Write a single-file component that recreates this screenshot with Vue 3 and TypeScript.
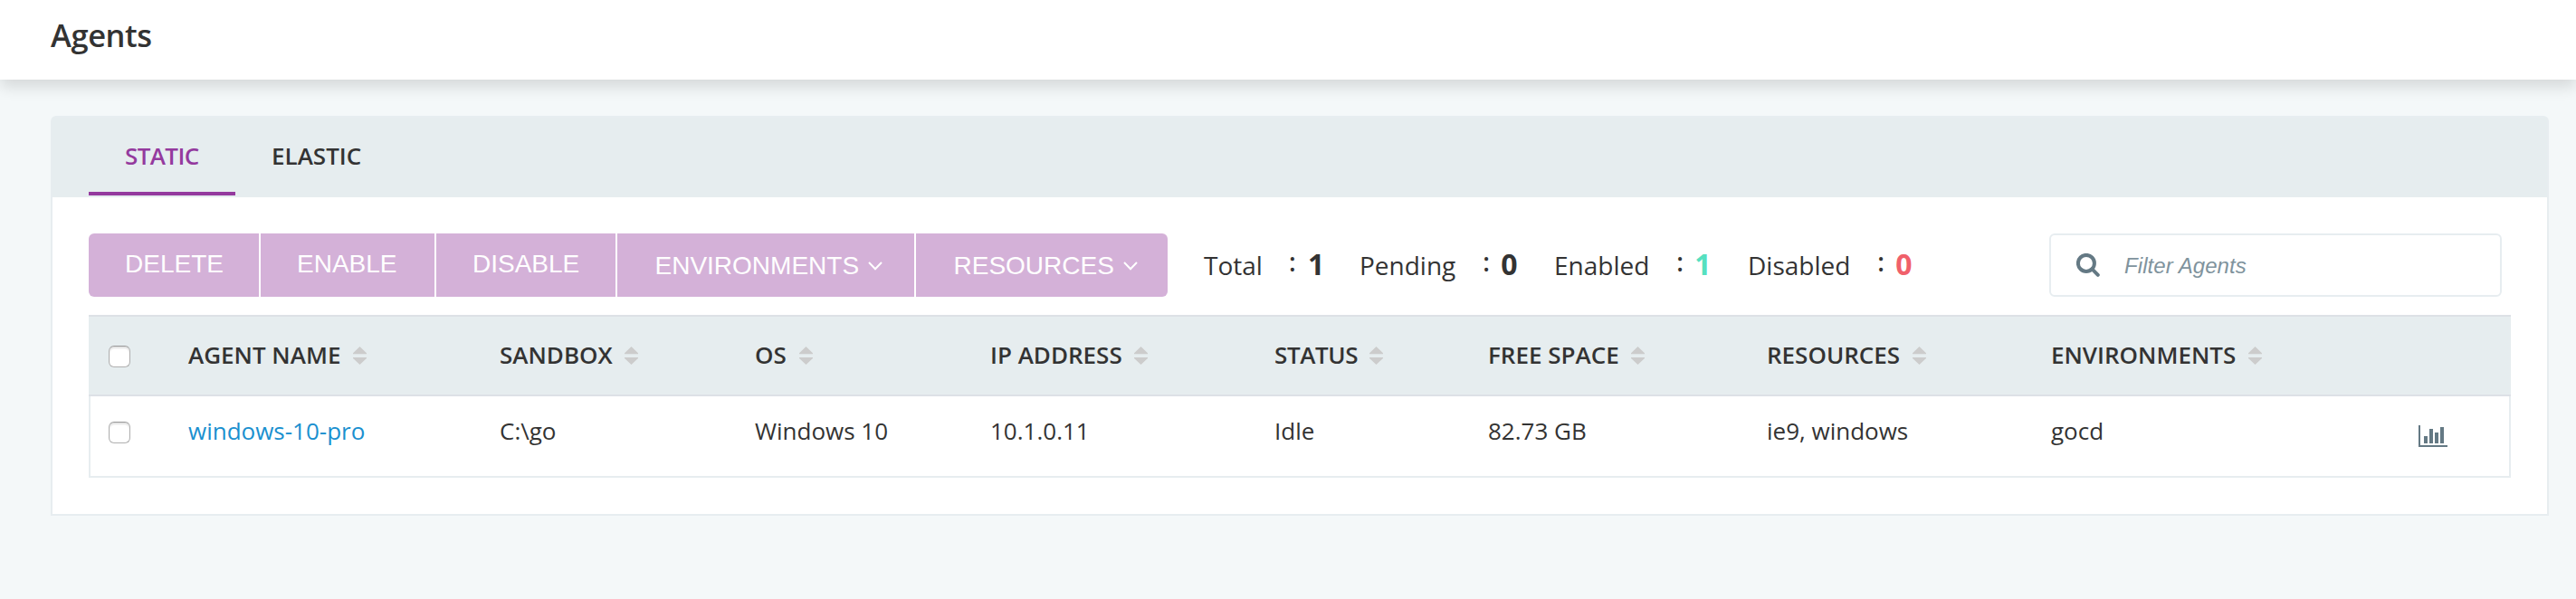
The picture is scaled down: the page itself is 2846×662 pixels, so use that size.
<script setup lang="ts">
import { ref } from 'vue'

interface Agent {
  name: string
  sandbox: string
  os: string
  ip: string
  status: string
  freeSpace: string
  resources: string
  environments: string
}

const tabs = ['Static', 'Elastic']
const activeTab = ref('Static')
const columns = ['Agent Name', 'Sandbox', 'OS', 'IP Address', 'Status', 'Free Space', 'Resources', 'Environments']
const actions = [
  { label: 'DELETE', menu: false },
  { label: 'ENABLE', menu: false },
  { label: 'DISABLE', menu: false },
  { label: 'ENVIRONMENTS', menu: true },
  { label: 'RESOURCES', menu: true },
]
const counts = [
  { label: 'Total', value: 1, kind: 'total' },
  { label: 'Pending', value: 0, kind: 'pending' },
  { label: 'Enabled', value: 1, kind: 'enabled' },
  { label: 'Disabled', value: 0, kind: 'disabled' },
]
const agents: Agent[] = [
  {
    name: 'windows-10-pro',
    sandbox: 'C:\\go',
    os: 'Windows 10',
    ip: '10.1.0.11',
    status: 'Idle',
    freeSpace: '82.73 GB',
    resources: 'ie9, windows',
    environments: 'gocd',
  },
]
const filter = ref('')
</script>

<template>
  <div class="page">
    <header class="page-header"><h1>Agents</h1></header>
    <main class="card">
      <nav class="tabs">
        <a v-for="t in tabs" :key="t" class="tab" :class="{ active: t === activeTab }" @click="activeTab = t">{{ t }}</a>
      </nav>
      <section class="content">
        <div class="toolbar">
          <div class="actions">
            <button v-for="a in actions" :key="a.label" class="action" :class="{ menu: a.menu }" disabled>
              <span>{{ a.label }}</span>
              <svg v-if="a.menu" class="chevron" viewBox="0 0 16 10"><path d="M1 1l7 7.2L15 1" /></svg>
            </button>
          </div>
          <ul class="counts">
            <li v-for="c in counts" :key="c.kind" :class="c.kind">
              <label>{{ c.label }}</label><i>:</i><b>{{ c.value }}</b>
            </li>
          </ul>
          <div class="search">
            <svg viewBox="0 0 26 26"><circle cx="10.9" cy="10.9" r="9" /><path d="M17.4 17.4l6.4 6.4" /></svg>
            <input v-model="filter" type="text" placeholder="Filter Agents" />
          </div>
        </div>
        <div class="table">
          <div class="row head">
            <span class="check"></span>
            <div v-for="c in columns" :key="c" class="cell">
              {{ c }}
              <svg class="sort" viewBox="0 0 15 20"><path d="M7.5 0L15 7.2V8.2H0V7.2ZM0 12H15V13L7.5 20L0 13Z" /></svg>
            </div>
          </div>
          <div v-for="a in agents" :key="a.name" class="row body">
            <span class="check"></span>
            <a class="cell link">{{ a.name }}</a>
            <div class="cell">{{ a.sandbox }}</div>
            <div class="cell">{{ a.os }}</div>
            <div class="cell">{{ a.ip }}</div>
            <div class="cell">{{ a.status }}</div>
            <div class="cell">{{ a.freeSpace }}</div>
            <div class="cell">{{ a.resources }}</div>
            <div class="cell">{{ a.environments }}</div>
            <svg class="chart" viewBox="0 0 32 24"><path d="M0 0h2v22h30v2H0zM6 12h4v8H6zM12 4h4v16h-4zM18 8h4v12h-4zM24 2h4v18h-4z" /></svg>
          </div>
        </div>
      </section>
    </main>
  </div>
</template>

<style>
body {
  margin: 0;
  background: #f4f8f9;
}
</style>

<style scoped>
* {
  box-sizing: border-box;
}
.page {
  min-height: 662px;
  background: #f4f8f9;
  font-family: "Open Sans", sans-serif;
  color: #333;
  overflow: hidden;
}
.page-header {
  height: 88px;
  padding: 0 56px;
  background: #fff;
  box-shadow: 0 8px 16px 0 rgba(0, 0, 0, 0.13);
}
h1 {
  margin: 0;
  font-size: 34.5px;
  line-height: 77px;
  font-weight: 600;
  letter-spacing: -0.4px;
}
.card {
  width: 2760px;
  height: 442px;
  margin: 40px 0 0 56px;
  border: 2px solid #e7edf0;
  border-radius: 6px 6px 0 0;
  background: #fff;
}
.tabs {
  display: flex;
  height: 88px;
  padding-left: 40px;
  background: #e6edef;
}
.tab {
  height: 86px;
  padding: 0 40px;
  font-size: 26px;
  line-height: 84px;
  font-weight: 600;
  text-transform: uppercase;
}
.tab.active {
  width: 162px;
  letter-spacing: -0.6px;
  color: #943a9e;
  border-bottom: 4px solid #943a9e;
}
.content {
  padding: 40px 40px 0;
}
.toolbar {
  display: flex;
  height: 70px;
}
.actions {
  display: grid;
  grid-template-columns: 188px 192px 198px 328px 278px;
  column-gap: 2px;
  width: 1192px;
  border-radius: 6px;
  overflow: hidden;
}
.action {
  display: flex;
  align-items: center;
  padding: 0 0 2px 40px;
  border: 0;
  background: #d4b1d8;
  color: #fff;
  font: 28px "Liberation Sans", Arial, sans-serif;
}
.action.menu {
  padding: 2px 0 0 41.5px;
}
.chevron {
  width: 16px;
  height: 10px;
  margin-left: 10px;
  fill: none;
  stroke: #fff;
  stroke-width: 2;
}
.counts {
  display: flex;
  margin: 0 0 0 40px;
  padding: 0;
  list-style: none;
  font-size: 28px;
  line-height: 70px;
}
.counts li {
  display: flex;
}
.counts .total {
  width: 172px;
}
.counts .pending {
  width: 215px;
}
.counts .enabled {
  width: 214px;
}
.counts i {
  margin-left: 30px;
  width: 20px;
  font-style: normal;
  font-weight: 600;
  line-height: 62px;
}
.counts .total i {
  margin-left: 29px;
  width: 21px;
}
.counts b {
  font-size: 32px;
  line-height: 67px;
  font-weight: 700;
}
.enabled b {
  color: #56e0c0;
}
.disabled b {
  color: #f0606a;
}
.search {
  display: flex;
  align-items: center;
  width: 500px;
  margin: 0 10px 0 auto;
  padding-left: 28px;
  border: 2px solid #e7edf0;
  border-radius: 6px;
}
.search svg {
  width: 26px;
  height: 26px;
  fill: none;
  stroke: #647984;
  stroke-width: 4;
  stroke-linecap: round;
}
.search input {
  width: 380px;
  margin-left: 27px;
  padding: 2px 0 0;
  border: 0;
  outline: 0;
  background: none;
  font: italic 24px "Liberation Sans", Arial, sans-serif;
  letter-spacing: 0.08px;
}
.search input::placeholder {
  color: #80939d;
}
.table {
  margin-top: 20px;
  border: 2px solid #e7edf0;
  border-top: 0;
}
.row {
  display: grid;
  grid-template-columns: 88px 344px 282px 260px 314px 236px 308px 314px 406px auto;
  padding-left: 20px;
  font-size: 26px;
  line-height: 84px;
}
.row.head {
  height: 90px;
  margin: 0 -2px;
  padding-left: 22px;
  border: 2px solid #dde1e6;
  border-width: 2px 0;
  background: #e6edef;
  font-weight: 600;
  text-transform: uppercase;
}
.row.body {
  height: 88px;
  line-height: 77px;
}
.cell {
  white-space: nowrap;
}
.head .cell:nth-child(6) {
  letter-spacing: -0.4px;
}
.link {
  color: #1a90cf;
}
.check {
  width: 24px;
  height: 24px;
  margin-top: 32px;
  border: 1.5px solid #b0b0b0;
  border-top-color: #999;
  border-radius: 6px;
  background: #fff;
  box-shadow: inset 0 2px 2px rgba(0, 0, 0, 0.12);
}
.body .check {
  margin-top: 28px;
}
.sort {
  width: 15px;
  height: 20px;
  margin-left: 7px;
  vertical-align: -1px;
  fill: #ccc;
}
.chart {
  width: 32px;
  height: 24px;
  margin-top: 32px;
  fill: #647984;
}
</style>
